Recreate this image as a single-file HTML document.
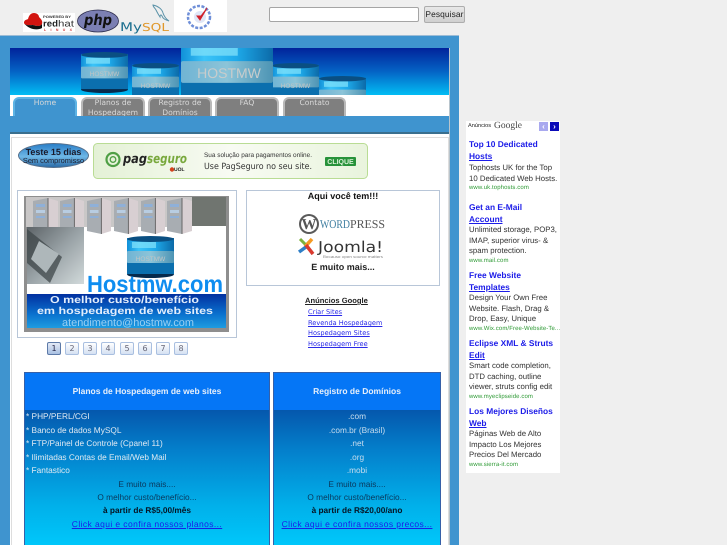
<!DOCTYPE html>
<html lang="pt"><head><meta charset="utf-8"><title>Hostmw</title>
<style>
html,body{margin:0;padding:0;background:#efefef}
body{width:727px;height:545px;overflow:hidden;position:relative;font-family:"Liberation Sans",sans-serif;text-rendering:geometricPrecision}
#w{position:absolute;left:0;top:0;width:727px;height:545px;overflow:hidden;filter:blur(.3px)}
.a{position:absolute}
.t{position:absolute;white-space:nowrap;font-size:9px;line-height:12px}
.c{text-align:center}
.d{font-family:"DejaVu Sans",sans-serif}
.tab{position:absolute;top:97px;height:19px;width:61px;box-sizing:border-box;background:#7f7f7f;border:2px solid #b9b9b9;border-bottom:0;border-radius:6px 6px 0 0;color:#d8d8d8;font:7.600px/9.500px "DejaVu Sans",sans-serif;text-align:center}
.tab span{position:absolute;left:-4px;right:-4px;top:-1px}
.n{position:absolute;top:342px;width:14px;height:13px;box-sizing:border-box;background:linear-gradient(#fff,#d5e1f2);border:1px solid #a9bfe0;border-radius:2px;font:8px/11px "DejaVu Sans",sans-serif;color:#667;text-align:center}
.at{position:absolute;left:469px;font:bold 8.400px/12px "Liberation Sans",sans-serif;color:#1c1ce8;white-space:nowrap}
.at u{text-decoration:underline}
.ab{position:absolute;left:469px;font:7.800px/10.600px "Liberation Sans",sans-serif;color:#333;white-space:nowrap}
.au{position:absolute;left:469px;font:6px/8px "Liberation Sans",sans-serif;letter-spacing:.1px;color:#2e9a35;white-space:nowrap}
.l{position:absolute;left:308px;font:6.600px/10px "DejaVu Sans",sans-serif;color:#2a2ae8;text-decoration:underline;white-space:nowrap}
.p{position:absolute;font:8.300px/13px "Liberation Sans",sans-serif;white-space:nowrap;color:#dfe9f2}
.q{color:#0a3a60}
</style></head><body><div id="w">

<!-- top logos -->
<svg class="a" style="left:23px;top:0" width="205" height="34" viewBox="0 0 205 34">
<rect x="0" y="13" width="52" height="19" fill="#fff"/>
<path d="M1 23c0-3 2-3 4-4 1-4 3-6 6-6s5 2 5 4c2 2 4 4 3 7-2 3-6 2-9 1-3 0-8 1-9-2z" fill="#d2140f"/>
<path d="M1 23c2 3 6 2 9 2 3 1 7 2 9-1v4c-5 3-14 1-18-5z" fill="#111"/>
<text x="20" y="18" font-family="Liberation Sans" font-size="3.400" font-weight="bold" textLength="28" lengthAdjust="spacingAndGlyphs" fill="#333">POWERED BY</text>
<text x="20" y="26.500" font-family="Liberation Sans" font-size="9" font-weight="bold" textLength="15" lengthAdjust="spacingAndGlyphs" fill="#222">red</text>
<text x="35" y="26.500" font-family="Liberation Sans" font-size="9" textLength="16" lengthAdjust="spacingAndGlyphs" fill="#333">hat</text>
<text x="21" y="31" font-family="Liberation Sans" font-size="3.500" font-weight="bold" textLength="28" fill="#c33">LINUX</text>
<ellipse cx="75" cy="21" rx="20.500" ry="11" fill="#7b7fb3" stroke="#2c2c4c" stroke-width=".8"/>
<text x="61" y="25" font-family="DejaVu Sans" font-size="15" font-style="italic" font-weight="bold" textLength="28" lengthAdjust="spacingAndGlyphs" fill="#111">php</text>
<text x="97" y="31" font-family="DejaVu Sans" font-size="12" textLength="22" lengthAdjust="spacingAndGlyphs" fill="#1c6f8f">My</text>
<text x="119" y="31" font-family="DejaVu Sans" font-size="11" textLength="27" lengthAdjust="spacingAndGlyphs" fill="#e0972a">SQL</text>
<path d="M130 5c5 1 9 4 10 8 1 3 3 6 6 8-3-1-6-2-7-5-1-2-2-1-2 1-2-3-3-5-4-7-1-2-3-3-3-5z" fill="none" stroke="#5a92a8" stroke-width="1"/>
<rect x="151" y="0" width="53" height="32" fill="#fff"/>
<circle cx="176" cy="17" r="11" fill="none" stroke="#6f8fd8" stroke-width="2.500" stroke-dasharray="3 1.500"/>
<circle cx="177" cy="17" r="6" fill="#dfe6f6"/>
<path d="M174 16l3 4 7-12-6 8z" fill="#d0202a" stroke="#d0202a"/>
</svg>

<!-- search -->
<input class="a" style="left:269px;top:7px;width:150px;height:15px;box-sizing:border-box;background:#fff;border:1px solid #a5a5a5;border-radius:2px;margin:0;padding:0">
<div class="a" style="left:424px;top:6px;width:41px;height:17px;box-sizing:border-box;background:linear-gradient(#e8e8e8,#cfcfcf);border:1px solid #adadad;border-radius:2px;font:8.400px/15px 'Liberation Sans',sans-serif;letter-spacing:.1px;color:#222;text-align:center">Pesquisar</div>

<!-- wrapper -->
<div class="a" style="left:0;top:35px;width:459px;height:510px;background:#3f94cf;border-top:1px solid #9cbcd6;box-sizing:border-box"></div>
<div class="a" style="left:10px;top:48px;width:440px;height:497px;background:#fff"></div>
<div class="a" style="left:449px;top:48px;width:1px;height:497px;background:#b8c4cc"></div>

<!-- banner -->
<svg class="a" style="left:10px;top:48px" width="439" height="47" viewBox="10 48 439 47">
<defs>
<linearGradient id="bg" x1="0" y1="0" x2="0" y2="1"><stop offset="0" stop-color="#01239b"/><stop offset=".5" stop-color="#0463c5"/><stop offset="1" stop-color="#02bdf4"/></linearGradient>
<linearGradient id="cy" x1="0" y1="0" x2="1" y2="0"><stop offset="0" stop-color="#1090d8"/><stop offset=".25" stop-color="#3cc4f8"/><stop offset=".6" stop-color="#1eaaea"/><stop offset="1" stop-color="#0c6aa8"/></linearGradient>
<linearGradient id="cm" x1="0" y1="0" x2="1" y2="0"><stop offset="0" stop-color="#70b4d4"/><stop offset=".5" stop-color="#8cc4d8"/><stop offset="1" stop-color="#4d94b4"/></linearGradient>
<symbol id="cyl" viewBox="0 0 47 42" preserveAspectRatio="none">
<rect x="0" y="2" width="47" height="38" rx="3" fill="#0a68a6"/>
<ellipse cx="23.500" cy="38.500" rx="23.500" ry="3.500" fill="#062a4c"/>
<rect x="0" y="27" width="47" height="11" fill="#0b6fae"/>
<rect x="0" y="2" width="47" height="14" fill="url(#cy)"/>
<ellipse cx="23.500" cy="3" rx="23.500" ry="3" fill="#0a4f82"/>
<rect x="0" y="15" width="47" height="12" rx="1" fill="url(#cm)"/>
<rect x="5" y="6" width="24" height="6" fill="#7fe0fa" opacity=".75"/>
</symbol>
</defs>
<rect x="10" y="48" width="439" height="47" fill="url(#bg)"/>
<use href="#cyl" x="81" y="52" width="47" height="41"/>
<use href="#cyl" x="132" y="63" width="47" height="38"/>
<use href="#cyl" x="272" y="63" width="47" height="38"/>
<use href="#cyl" x="319" y="76" width="47" height="38"/>
<use href="#cyl" x="181" y="34" width="92" height="76"/>
<g font-family="Liberation Sans" fill="#c8cccc" text-anchor="middle">
<text x="104.500" y="76" font-size="6.500" fill="#c0c4c4">HOSTMW</text>
<text x="155.500" y="88" font-size="6.500" fill="#c0c4c4">HOSTMW</text>
<text x="295.500" y="88" font-size="6.500" fill="#c0c4c4">HOSTMW</text>
<text x="229" y="78" font-size="14">HOSTMW</text>
</g>
</svg>

<!-- tabs -->
<div class="tab" style="left:13px;width:64px;background:#3f94cf;border-color:#5cb3e4"><span>Home</span></div>
<div class="tab" style="left:81px;width:64px"><span>Planos de<br>Hospedagem</span></div>
<div class="tab" style="left:148px;width:64px"><span>Registro de<br>Domínios</span></div>
<div class="tab" style="left:215px;width:64px"><span>FAQ</span></div>
<div class="tab" style="left:283px;width:63px"><span>Contato</span></div>
<div class="a" style="left:10px;top:116px;width:439px;height:16px;background:#3f94cf"></div>
<div class="a" style="left:10px;top:132px;width:439px;height:2px;background:#3a6f8e"></div>
<div class="a" style="left:11px;top:137px;width:438px;height:408px;box-sizing:border-box;border:1px solid #ddd;border-bottom:0"></div>

<!-- teste button -->
<div class="a" style="left:18px;top:143px;width:71px;height:25px;border-radius:50%;background:linear-gradient(#2a7fc8,#6eb7e6 55%,#2b6ca8);border:1px solid #56708c;box-sizing:border-box"></div>
<div class="t c" style="left:18px;width:71px;top:146px;font-weight:bold;font-size:9px;color:#1a1a2a">Teste 15 dias</div>
<div class="t c" style="left:18px;width:71px;top:155px;font-size:7.400px;color:#1a1a2a">Sem compromisso</div>

<!-- pagseguro -->
<svg class="a" style="left:93px;top:143px" width="275" height="36" viewBox="0 0 275 36">
<defs><linearGradient id="pg" x1="0" y1="0" x2="1" y2="0"><stop offset="0" stop-color="#e4f1d6"/><stop offset=".5" stop-color="#f8fbf3"/><stop offset="1" stop-color="#e9f4dd"/></linearGradient></defs>
<rect x=".5" y=".5" width="274" height="35" rx="4" fill="url(#pg)" stroke="#b9dc94"/>
<circle cx="20" cy="16.500" r="6.500" fill="none" stroke="#4f9f45" stroke-width="2.200"/>
<circle cx="20" cy="16.500" r="2.800" fill="none" stroke="#4f9f45" stroke-width="1.300"/>
<text x="30" y="20" font-family="DejaVu Sans" font-size="13" font-style="italic" font-weight="bold" fill="#222" textLength="24" lengthAdjust="spacingAndGlyphs">pag</text>
<text x="54" y="20" font-family="DejaVu Sans" font-size="13" font-style="italic" font-weight="bold" fill="#78a83c" textLength="40" lengthAdjust="spacingAndGlyphs">seguro</text>
<text x="81" y="28" font-family="Liberation Sans" font-size="5" font-weight="bold" fill="#222">UOL</text>
<circle cx="79" cy="26.500" r="2.200" fill="#d3421c"/>
<text x="111" y="14" font-family="Liberation Sans" font-size="6.500" fill="#333" textLength="108" lengthAdjust="spacingAndGlyphs">Sua solução para pagamentos online.</text>
<text x="111" y="26" font-family="DejaVu Sans" font-size="8.500" fill="#333" textLength="108" lengthAdjust="spacingAndGlyphs">Use PagSeguro no seu site.</text>
<rect x="232" y="14" width="31" height="9" rx="1" fill="#28923a"/>
<text x="247.500" y="21" text-anchor="middle" font-family="Liberation Sans" font-size="7" font-weight="bold" fill="#dff3da">CLIQUE</text>
</svg>

<!-- slider -->
<div class="a" style="left:17px;top:190px;width:220px;height:148px;box-sizing:border-box;border:1px solid #b8c6d8"></div>
<svg class="a" style="left:24px;top:196px" width="205" height="136" viewBox="0 0 205 136">
<defs>
<linearGradient id="bb" x1="0" y1="0" x2="0" y2="1"><stop offset="0" stop-color="#0230a0"/><stop offset=".6" stop-color="#0a72cf"/><stop offset="1" stop-color="#1f9ce0"/></linearGradient>
<linearGradient id="kb" x1="0" y1="0" x2="1" y2="1"><stop offset="0" stop-color="#5d6468"/><stop offset=".5" stop-color="#9aa3a7"/><stop offset="1" stop-color="#d2dadb"/></linearGradient>
<symbol id="srv" viewBox="0 0 25 36" preserveAspectRatio="none"><path d="M0 3l15-3v36l-15-3z" fill="#a8adb2"/><path d="M15 0l10 3v30l-10 3z" fill="#d8cfd2"/><path d="M15 0v36" stroke="#666" stroke-width="1"/><rect x="3" y="6" width="9" height="3" fill="#8fb0d8"/><rect x="3" y="12" width="9" height="3" fill="#b8cde2"/><rect x="3" y="18" width="9" height="2" fill="#8fb0d8"/></symbol>
</defs>
<rect width="205" height="136" fill="#8e8e8e"/>
<rect x="3" y="30" width="199" height="102" fill="#fff"/>
<rect x="2" y="1" width="166" height="30" fill="#c9c7c7"/>
<rect x="168" y="1" width="34" height="29" fill="#707570"/>
<use href="#srv" x="9" y="2" width="25" height="36"/><use href="#srv" x="36" y="2" width="24" height="36"/><use href="#srv" x="63" y="2" width="24" height="36"/><use href="#srv" x="90" y="2" width="24" height="36"/><use href="#srv" x="117" y="2" width="24" height="36"/><use href="#srv" x="143" y="2" width="25" height="36"/>
<rect x="3" y="31" width="57" height="57" fill="url(#kb)"/>
<path d="M3 33l35 28-12 26-23-20z" fill="#3f4749" opacity=".75"/>
<path d="M15 45l20 13-13 19-15-14z" fill="#aeb7ba"/>
<use href="#cyl" x="103" y="40" width="47" height="42"/>
<text x="126.500" y="65" text-anchor="middle" font-family="Liberation Sans" font-size="6.500" fill="#c0c4c4">HOSTMW</text>
<text x="63" y="96" font-family="Liberation Sans" font-weight="bold" font-size="23.500" fill="#0e8df0" textLength="136" lengthAdjust="spacingAndGlyphs">Hostmw.com</text>
<rect x="3" y="98" width="199" height="34" fill="url(#bb)"/>
<text x="26" y="107" font-family="Liberation Sans" font-weight="bold" font-size="10" fill="#e2eefc" textLength="149" lengthAdjust="spacingAndGlyphs">O melhor custo/benefício</text>
<text x="13" y="118" font-family="Liberation Sans" font-weight="bold" font-size="10" fill="#e2eefc" textLength="176" lengthAdjust="spacingAndGlyphs">em hospedagem de web sites</text>
<text x="38" y="130" font-family="Liberation Sans" font-size="11" fill="#9bd0f2" textLength="132" lengthAdjust="spacingAndGlyphs">atendimento@hostmw.com</text>
</svg>

<div class="n" style="left:47px;background:linear-gradient(#e3eaf6,#a9c0e2);border-color:#5d7aa8;color:#224">1</div>
<div class="n" style="left:65px">2</div><div class="n" style="left:83px">3</div><div class="n" style="left:101px">4</div><div class="n" style="left:120px">5</div><div class="n" style="left:138px">6</div><div class="n" style="left:156px">7</div><div class="n" style="left:174px">8</div>

<!-- aqui voce tem -->
<div class="a" style="left:246px;top:190px;width:194px;height:96px;box-sizing:border-box;border:1px solid #b8c6d8"></div>
<div class="t c" style="left:246px;width:194px;top:190px;font-weight:bold;font-size:9px;color:#111">Aqui você tem!!!</div>
<svg class="a" style="left:296px;top:212px" width="92" height="50" viewBox="0 0 92 50">
<circle cx="13" cy="12" r="10" fill="#5a5a5a"/><circle cx="13" cy="12" r="8" fill="#fff"/>
<text x="13" y="17" text-anchor="middle" font-family="Liberation Serif" font-size="15" font-weight="bold" fill="#555">W</text>
<text x="24" y="16" font-family="Liberation Serif" font-size="12" fill="#3f7ea0" textLength="30" lengthAdjust="spacingAndGlyphs">WORD</text>
<text x="54" y="16" font-family="Liberation Serif" font-size="12" fill="#555" textLength="35" lengthAdjust="spacingAndGlyphs">PRESS</text>
<path d="M4 27l6 6 5-5" fill="none" stroke="#7cb13b" stroke-width="3"/><path d="M16 27l-7 8" stroke="#f59a23" stroke-width="3.500"/><path d="M3 40l7-5" stroke="#2f7fc7" stroke-width="3.500"/><path d="M10 33l7 9" stroke="#d93a2f" stroke-width="3.500"/>
<text x="22" y="40" font-family="DejaVu Sans" font-size="15" fill="#333" textLength="65" lengthAdjust="spacingAndGlyphs">Joomla!</text>
<text x="27" y="46" font-family="Liberation Sans" font-size="3.800" fill="#888" textLength="60" lengthAdjust="spacingAndGlyphs">Because open source matters</text>
</svg>
<div class="t c" style="left:246px;width:194px;top:261px;font-weight:bold;font-size:9px;color:#222">E muito mais...</div>

<div class="t" style="left:305px;top:295px;font-weight:bold;font-size:7.600px;line-height:11px;color:#222;text-decoration:underline">Anúncios Google</div>
<div class="l" style="top:307px">Criar Sites</div>
<div class="l" style="top:318px">Revenda Hospedagem</div>
<div class="l" style="top:328px">Hospedagem Sites</div>
<div class="l" style="top:339px">Hospedagem Free</div>

<!-- plans -->
<div class="a" style="left:24px;top:372px;width:246px;height:173px;box-sizing:border-box;border:1px solid #3560a8;border-bottom:0;background:linear-gradient(#0558ad 0,#0480cc 30%,#01b0ea 70%,#00c8fb 100%) 0 37px/100% 136px no-repeat"></div>
<div class="a" style="left:25px;top:373px;width:244px;height:37px;background:#0576f6"></div>
<div class="t c" style="left:25px;width:244px;top:385px;font-weight:bold;font-size:8.500px;color:#e4eefb">Planos de Hospedagem de web sites</div>
<div class="p" style="left:26px;top:410px">* PHP/PERL/CGI</div>
<div class="p" style="left:26px;top:424px">* Banco de dados MySQL</div>
<div class="p" style="left:26px;top:437px">* FTP/Painel de Controle (Cpanel 11)</div>
<div class="p" style="left:26px;top:451px">* Ilimitadas Contas de Email/Web Mail</div>
<div class="p" style="left:26px;top:464px">* Fantastico</div>
<div class="p q c" style="left:25px;width:244px;top:478px">E muito mais....</div>
<div class="p q c" style="left:25px;width:244px;top:491px">O melhor custo/benefício...</div>
<div class="p c" style="left:25px;width:244px;top:504px;color:#061525;font-weight:bold">à partir de R$5,00/mês</div>
<div class="p c d" style="left:25px;width:244px;top:518px;color:#1a20e6;font-size:8.500px;letter-spacing:.4px;text-decoration:underline">Click aqui e confira nossos planos...</div>

<div class="a" style="left:273px;top:372px;width:168px;height:173px;box-sizing:border-box;border:1px solid #3560a8;border-bottom:0;background:linear-gradient(#0558ad 0,#0480cc 30%,#01b0ea 70%,#00c8fb 100%) 0 37px/100% 136px no-repeat"></div>
<div class="a" style="left:274px;top:373px;width:166px;height:37px;background:#0576f6"></div>
<div class="t c" style="left:274px;width:166px;top:385px;font-weight:bold;font-size:8.500px;color:#e4eefb">Registro de Domínios</div>
<div class="p c" style="left:274px;width:166px;top:410px;color:#c6dcee">.com</div>
<div class="p c" style="left:274px;width:166px;top:424px;color:#c6dcee">.com.br (Brasil)</div>
<div class="p c" style="left:274px;width:166px;top:437px;color:#c6dcee">.net</div>
<div class="p c" style="left:274px;width:166px;top:451px;color:#c6dcee">.org</div>
<div class="p c" style="left:274px;width:166px;top:464px;color:#c6dcee">.mobi</div>
<div class="p q c" style="left:274px;width:166px;top:478px">E muito mais....</div>
<div class="p q c" style="left:274px;width:166px;top:491px">O melhor custo/benefício...</div>
<div class="p c" style="left:274px;width:166px;top:504px;color:#061525;font-weight:bold">à partir de R$20,00/ano</div>
<div class="p c d" style="left:274px;width:166px;top:518px;color:#1a20e6;font-size:8.500px;letter-spacing:.4px;text-decoration:underline">Click aqui e confira nossos precos...</div>

<!-- ads -->
<div class="a" style="left:466px;top:121px;width:94px;height:352px;background:#fff"></div>
<div class="t" style="left:468px;top:120px;font-size:5.600px;color:#222">Anúncios</div>
<div class="t" style="left:494px;top:119px;font:9.500px/14px 'Liberation Serif',serif;color:#444">Google</div>
<div class="a" style="left:539px;top:122px;width:9px;height:9px;background:#a9a9ef;color:#fff;font:bold 8px/9px 'Liberation Sans';text-align:center">‹</div>
<div class="a" style="left:550px;top:122px;width:9px;height:9px;background:#0a0ab8;color:#fff;font:bold 8px/9px 'Liberation Sans';text-align:center">›</div>

<div class="at" style="top:138px">Top 10 Dedicated<br><u>Hosts</u></div>
<div class="ab" style="top:163px">Tophosts UK for the Top<br>10 Dedicated Web Hosts.</div>
<div class="au" style="top:184px">www.uk.tophosts.com</div>
<div class="at" style="top:201px">Get an E-Mail<br><u>Account</u></div>
<div class="ab" style="top:225px">Unlimited storage, POP3,<br>IMAP, superior virus- &amp;<br>spam protection.</div>
<div class="au" style="top:257px">www.mail.com</div>
<div class="at" style="top:269px">Free Website<br><u>Templates</u></div>
<div class="ab" style="top:293px">Design Your Own Free<br>Website. Flash, Drag &amp;<br>Drop, Easy, Unique</div>
<div class="au" style="top:325px">www.Wix.com/Free-Website-Te...</div>
<div class="at" style="top:337px">Eclipse XML &amp; Struts<br><u>Edit</u></div>
<div class="ab" style="top:361px">Smart code completion,<br>DTD caching, outline<br>viewer, struts config edit</div>
<div class="au" style="top:393px">www.myeclipseide.com</div>
<div class="at" style="top:405px">Los Mejores Diseños<br><u>Web</u></div>
<div class="ab" style="top:429px">Páginas Web de Alto<br>Impacto Los Mejores<br>Precios Del Mercado</div>
<div class="au" style="top:461px">www.sierra-it.com</div>
</div></body></html>
